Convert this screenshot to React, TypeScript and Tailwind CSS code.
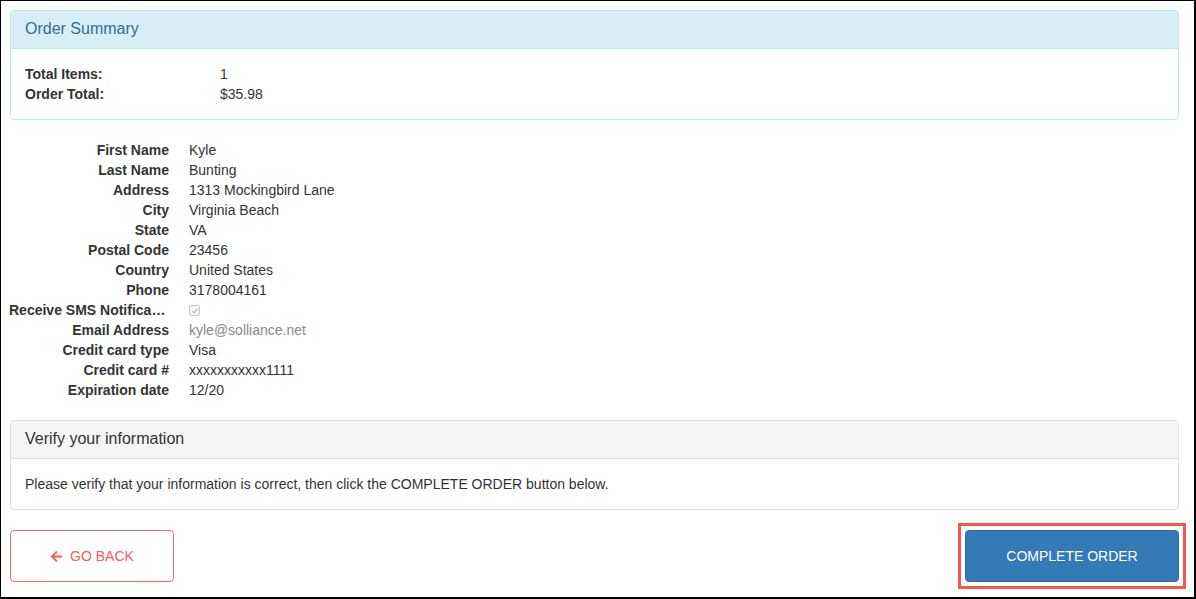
import React from "react";
import { FaArrowLeft } from "react-icons/fa";

const rows: [string, React.ReactNode][] = [
  ["First Name", "Kyle"],
  ["Last Name", "Bunting"],
  ["Address", "1313 Mockingbird Lane"],
  ["City", "Virginia Beach"],
  ["State", "VA"],
  ["Postal Code", "23456"],
  ["Country", "United States"],
  ["Phone", "3178004161"],
  [
    "Receive SMS Notifications",
    <span className="mt-[5px] flex h-[11px] w-[11px] items-center justify-center rounded-[2px] border border-[#c8c8c8] bg-[#f7f7f7]">
      <svg width="8" height="8" viewBox="0 0 8 8">
        <path d="M1.3 4.2 L3.1 6 L6.8 1.6" fill="none" stroke="#9a9a9a" strokeWidth="1" />
      </svg>
    </span>,
  ],
  ["Email Address", <span className="text-[#888]">kyle@solliance.net</span>],
  ["Credit card type", "Visa"],
  ["Credit card #", "xxxxxxxxxxx1111"],
  ["Expiration date", "12/20"],
];

export default function App() {
  return (
    <div
      className="box-border h-[599px] w-[1196px] overflow-hidden border-t border-l border-r-2 border-b-2 border-black bg-white pl-[9px] pt-[9px] text-[14px] leading-[20px] text-[#333]"
      style={{ fontFamily: '"Liberation Sans", Arial, sans-serif' }}
    >
      <div className="w-[1169px]">
        {/* Order Summary */}
        <div className="mb-[20px] rounded-[4px] border border-[#bce8f1] bg-white">
          <div className="h-[38px] rounded-t-[3px] border-b border-[#bce8f1] bg-[#d9edf7] pl-[14px] pr-[15px] pt-[9px] text-[16px] leading-[18px] text-[#31708f]">
            Order Summary
          </div>
          <div className="py-[15px] pl-[14px] pr-[15px]">
            <div className="flex">
              <div className="w-[195px] font-bold">Total Items:</div>
              <div>1</div>
            </div>
            <div className="flex">
              <div className="w-[195px] font-bold">Order Total:</div>
              <div>$35.98</div>
            </div>
          </div>
        </div>

        {/* Details */}
        <dl className="mb-[20px] -ml-[1px]">
          {rows.map(([label, value]) => (
            <div key={label} className="flex h-[20px]">
              <dt className="w-[160px] truncate text-right font-bold">{label}</dt>
              <dd className="ml-[20px] flex">{value}</dd>
            </div>
          ))}
        </dl>

        {/* Verify panel */}
        <div className="mb-[20px] rounded-[4px] border border-[#ddd] bg-white">
          <div className="h-[38px] rounded-t-[3px] border-b border-[#ddd] bg-[#f5f5f5] pl-[14px] pr-[15px] pt-[9px] text-[16px] leading-[18px] text-[#333]">
            Verify your information
          </div>
          <div className="py-[15px] pl-[14px] pr-[15px]">
            Please verify that your information is correct, then click the COMPLETE ORDER button below.
          </div>
        </div>

        {/* Buttons */}
        <div className="flex items-start justify-between">
          <button className="flex h-[52px] w-[164px] items-center justify-center gap-[7px] rounded-[4px] border border-[#ef6b6b] bg-white text-[14px] text-[#ef6060]">
            <FaArrowLeft className="h-[13px] w-[13px]" />
            <span>GO BACK</span>
          </button>
          <div className="outline-3 outline-offset-4 outline-[#f2594b]">
            <button className="block h-[52px] w-[214px] rounded-[4px] border border-[#2e6da4] bg-[#337ab7] text-[14px] text-white">
              COMPLETE ORDER
            </button>
          </div>
        </div>
      </div>
    </div>
  );
}
